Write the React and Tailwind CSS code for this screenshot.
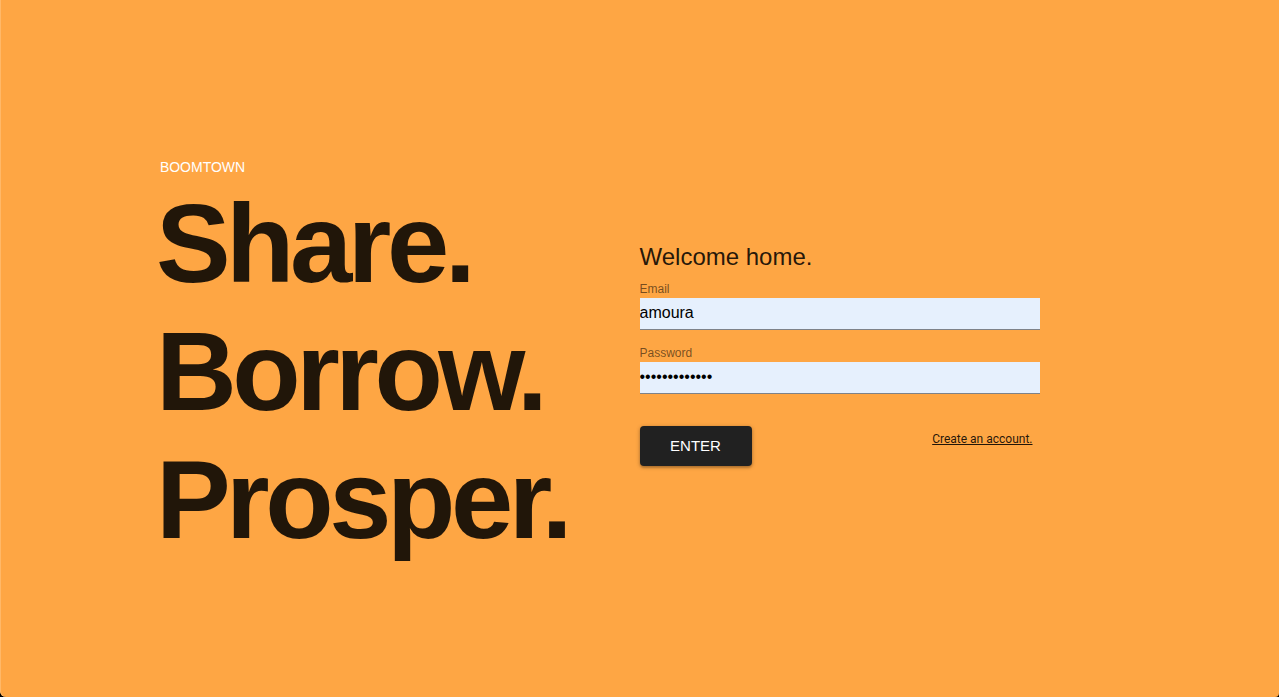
import React, { useState } from "react";

const headlines = ["Share.", "Borrow.", "Prosper."];

function Field({ id, label, type, value, onChange }) {
  return (
    <div className="flex flex-col">
      <label htmlFor={id} className="text-xs leading-[18px] text-black/55">
        {label}
      </label>
      <input
        id={id}
        type={type}
        value={value}
        onChange={(event) => onChange(event.target.value)}
        className="h-8 w-full border-b border-[#7e8289] bg-[#e6f0fd] text-base text-black outline-none"
      />
    </div>
  );
}

export default function App() {
  const [email, setEmail] = useState("amoura");
  const [password, setPassword] = useState("boomtown12345");

  return (
    <div className="flex min-h-screen bg-black font-['Liberation_Sans',Arial,sans-serif]">
      <main className="grid flex-1 items-center rounded-bl-md rounded-br-sm bg-[#fea644] px-[12.5%] shadow-[inset_1px_0_0_#ffb868] md:grid-cols-2">
        <section className="pb-px pt-6">
          <p className="text-sm leading-5 text-white">BOOMTOWN</p>
          <h1 className="-ml-1 pt-[3px] text-[112px] font-bold leading-[128px] tracking-[-0.04em] text-black/87">
            {headlines.map((line) => (
              <span key={line} className="block">
                {line}
              </span>
            ))}
          </h1>
        </section>

        <form
          className="w-full max-w-[400px] pt-2"
          onSubmit={(event) => event.preventDefault()}
        >
          <h2 className="pb-[7px] pt-px text-2xl leading-8 text-black/87">Welcome home.</h2>
          <div className="flex flex-col gap-3.5">
            <Field id="email" label="Email" type="text" value={email} onChange={setEmail} />
            <Field
              id="password"
              label="Password"
              type="password"
              value={password}
              onChange={setPassword}
            />
          </div>
          <div className="flex items-start justify-between pt-8">
            <button
              type="submit"
              className="h-10 w-28 rounded bg-[#212121] pt-0.5 text-[15px] text-white shadow-[0_1px_4px_rgba(0,0,0,0.3),0_2px_2px_rgba(0,0,0,0.14)]"
            >
              ENTER
            </button>
            <a
              href="#signup"
              className="mr-[7px] mt-[3px] font-[Roboto,sans-serif] text-xs leading-5 text-black/87 underline"
            >
              Create an account.
            </a>
          </div>
        </form>
      </main>
    </div>
  );
}
